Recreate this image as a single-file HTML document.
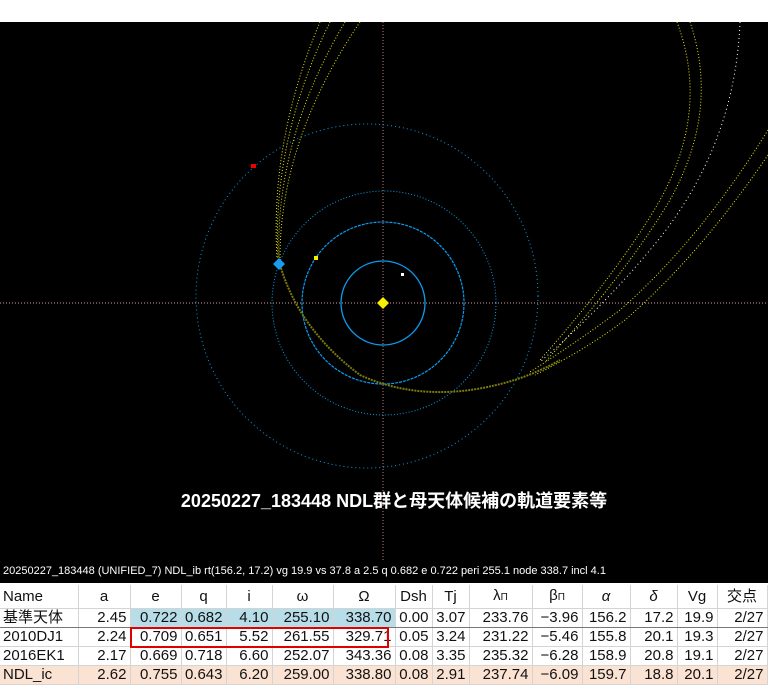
<!DOCTYPE html>
<html><head><meta charset="utf-8"><style>
body{margin:0;width:768px;height:684px;overflow:hidden;background:#fff;font-family:"Liberation Sans","Noto Sans CJK JP",sans-serif;position:relative}
#map{position:absolute;left:0;top:22px;width:768px;height:561px;background:#000}
.cap{position:absolute;left:0;width:768px;top:487px;text-align:center;color:#fff;font-weight:bold;font-size:18px;padding-left:20px;box-sizing:border-box}
.st{position:absolute;left:3px;top:565px;color:#fff;font-size:11px;white-space:nowrap}
table{position:absolute;left:0;top:585px;border-collapse:collapse;font-size:15px;color:#111;table-layout:fixed}
td{border-right:1px solid #d4d4d4;border-bottom:1px solid #d4d4d4;padding:0 3px;height:18px;text-align:right;white-space:nowrap;overflow:hidden;line-height:18px}
td:first-child{text-align:left}
tr.h td{text-align:center;height:21px;line-height:21px}
tr.h td:first-child{text-align:left}
.s{font-size:10px}
.b{background:#b7dde8}
tr.p td{background:#fbe3d4}
tr.r1 td{border-bottom:1px solid #777}
.box{position:absolute;left:130px;top:627px;width:255px;height:17px;border:2px solid #e00000}
</style></head><body>
<div id="map">
<svg width="768" height="561" viewBox="0 22 768 561" xmlns="http://www.w3.org/2000/svg">
<g fill="none">
<line x1="0" y1="303" x2="768" y2="303" stroke="#d9a0a0" stroke-width="1" stroke-dasharray="1 2"/>
<line x1="383" y1="22" x2="383" y2="560" stroke="#c07878" stroke-width="1" stroke-dasharray="1 2"/>
<circle cx="383" cy="303" r="42" stroke="#0a9cf0" stroke-width="1.3"/>
<circle cx="383" cy="303" r="81" stroke="#0a9cf0" stroke-width="1.2" stroke-dasharray="3 1"/>
<circle cx="384" cy="303" r="112" stroke="#0a9cf0" stroke-width="1" stroke-dasharray="1 2"/>
<ellipse cx="367" cy="296" rx="171" ry="172" stroke="#0a9cf0" stroke-width="1" stroke-dasharray="1 3"/>
<g stroke="#e8e800" stroke-width="1" stroke-dasharray="1 2">
<path d="M320 22 Q270 140 277 258"/>
<path d="M330 22 Q272 140 278 258"/>
<path d="M345 22 Q275 140 279 258"/>
<path d="M360 22 Q280 140 280 258"/>
<path d="M677 22 Q710 110 660 200 Q620 270 540 360"/>
<path d="M690 22 Q720 110 670 200 Q625 275 545 362"/>
<path d="M768 130 Q700 240 620 310 Q580 340 530 372"/>
<path d="M768 155 Q700 255 625 320 Q585 350 535 375"/>
</g>
<path d="M740 22 Q735 150 650 250 Q600 310 540 362" stroke="#fff" stroke-width="1" stroke-dasharray="1 3"/>
<path d="M281 268 Q300 330 360 375 Q410 398 470 390 Q520 383 560 360" stroke="#7a7a10" stroke-width="2" stroke-dasharray="2 1"/>
</g>
<rect x="251" y="164" width="5" height="4" fill="#f00000"/>
<polygon points="279,258 285,264 279,270 273,264" fill="#1a9cf0"/>
<rect x="314" y="256" width="4" height="4" fill="#f0f000"/>
<rect x="401" y="273" width="3" height="3" fill="#fff"/>
<polygon points="383,297 389,303 383,309 377,303" fill="#f8f000"/>
</svg>
</div>
<div class="cap">20250227_183448 NDL群と母天体候補の軌道要素等</div>
<div class="st">20250227_183448 (UNIFIED_7) NDL_ib rt(156.2, 17.2) vg 19.9 vs 37.8 a 2.5 q 0.682 e 0.722 peri 255.1 node 338.7 incl 4.1</div>
<table>
<colgroup><col style="width:78px"><col style="width:52px"><col style="width:51px"><col style="width:45px"><col style="width:46px"><col style="width:61px"><col style="width:62px"><col style="width:37px"><col style="width:37px"><col style="width:63px"><col style="width:50px"><col style="width:48px"><col style="width:47px"><col style="width:40px"><col style="width:50px"></colgroup>
<tr class="h"><td>Name</td><td>a</td><td>e</td><td>q</td><td>i</td><td>ω</td><td>Ω</td><td>Dsh</td><td>Tj</td><td>λ<span class="s">Π</span></td><td>β<span class="s">Π</span></td><td><i>α</i></td><td><i>δ</i></td><td>Vg</td><td>交点</td></tr>
<tr class="r1"><td>基準天体</td><td>2.45</td><td class="b">0.722</td><td class="b">0.682</td><td class="b">4.10</td><td class="b">255.10</td><td class="b">338.70</td><td>0.00</td><td>3.07</td><td>233.76</td><td>−3.96</td><td>156.2</td><td>17.2</td><td>19.9</td><td>2/27</td></tr>
<tr><td>2010DJ1</td><td>2.24</td><td>0.709</td><td>0.651</td><td>5.52</td><td>261.55</td><td>329.71</td><td>0.05</td><td>3.24</td><td>231.22</td><td>−5.46</td><td>155.8</td><td>20.1</td><td>19.3</td><td>2/27</td></tr>
<tr><td>2016EK1</td><td>2.17</td><td>0.669</td><td>0.718</td><td>6.60</td><td>252.07</td><td>343.36</td><td>0.08</td><td>3.35</td><td>235.32</td><td>−6.28</td><td>158.9</td><td>20.8</td><td>19.1</td><td>2/27</td></tr>
<tr class="p"><td>NDL_ic</td><td>2.62</td><td>0.755</td><td>0.643</td><td>6.20</td><td>259.00</td><td>338.80</td><td>0.08</td><td>2.91</td><td>237.74</td><td>−6.09</td><td>159.7</td><td>18.8</td><td>20.1</td><td>2/27</td></tr>
</table>
<div class="box"></div>
</body></html>
